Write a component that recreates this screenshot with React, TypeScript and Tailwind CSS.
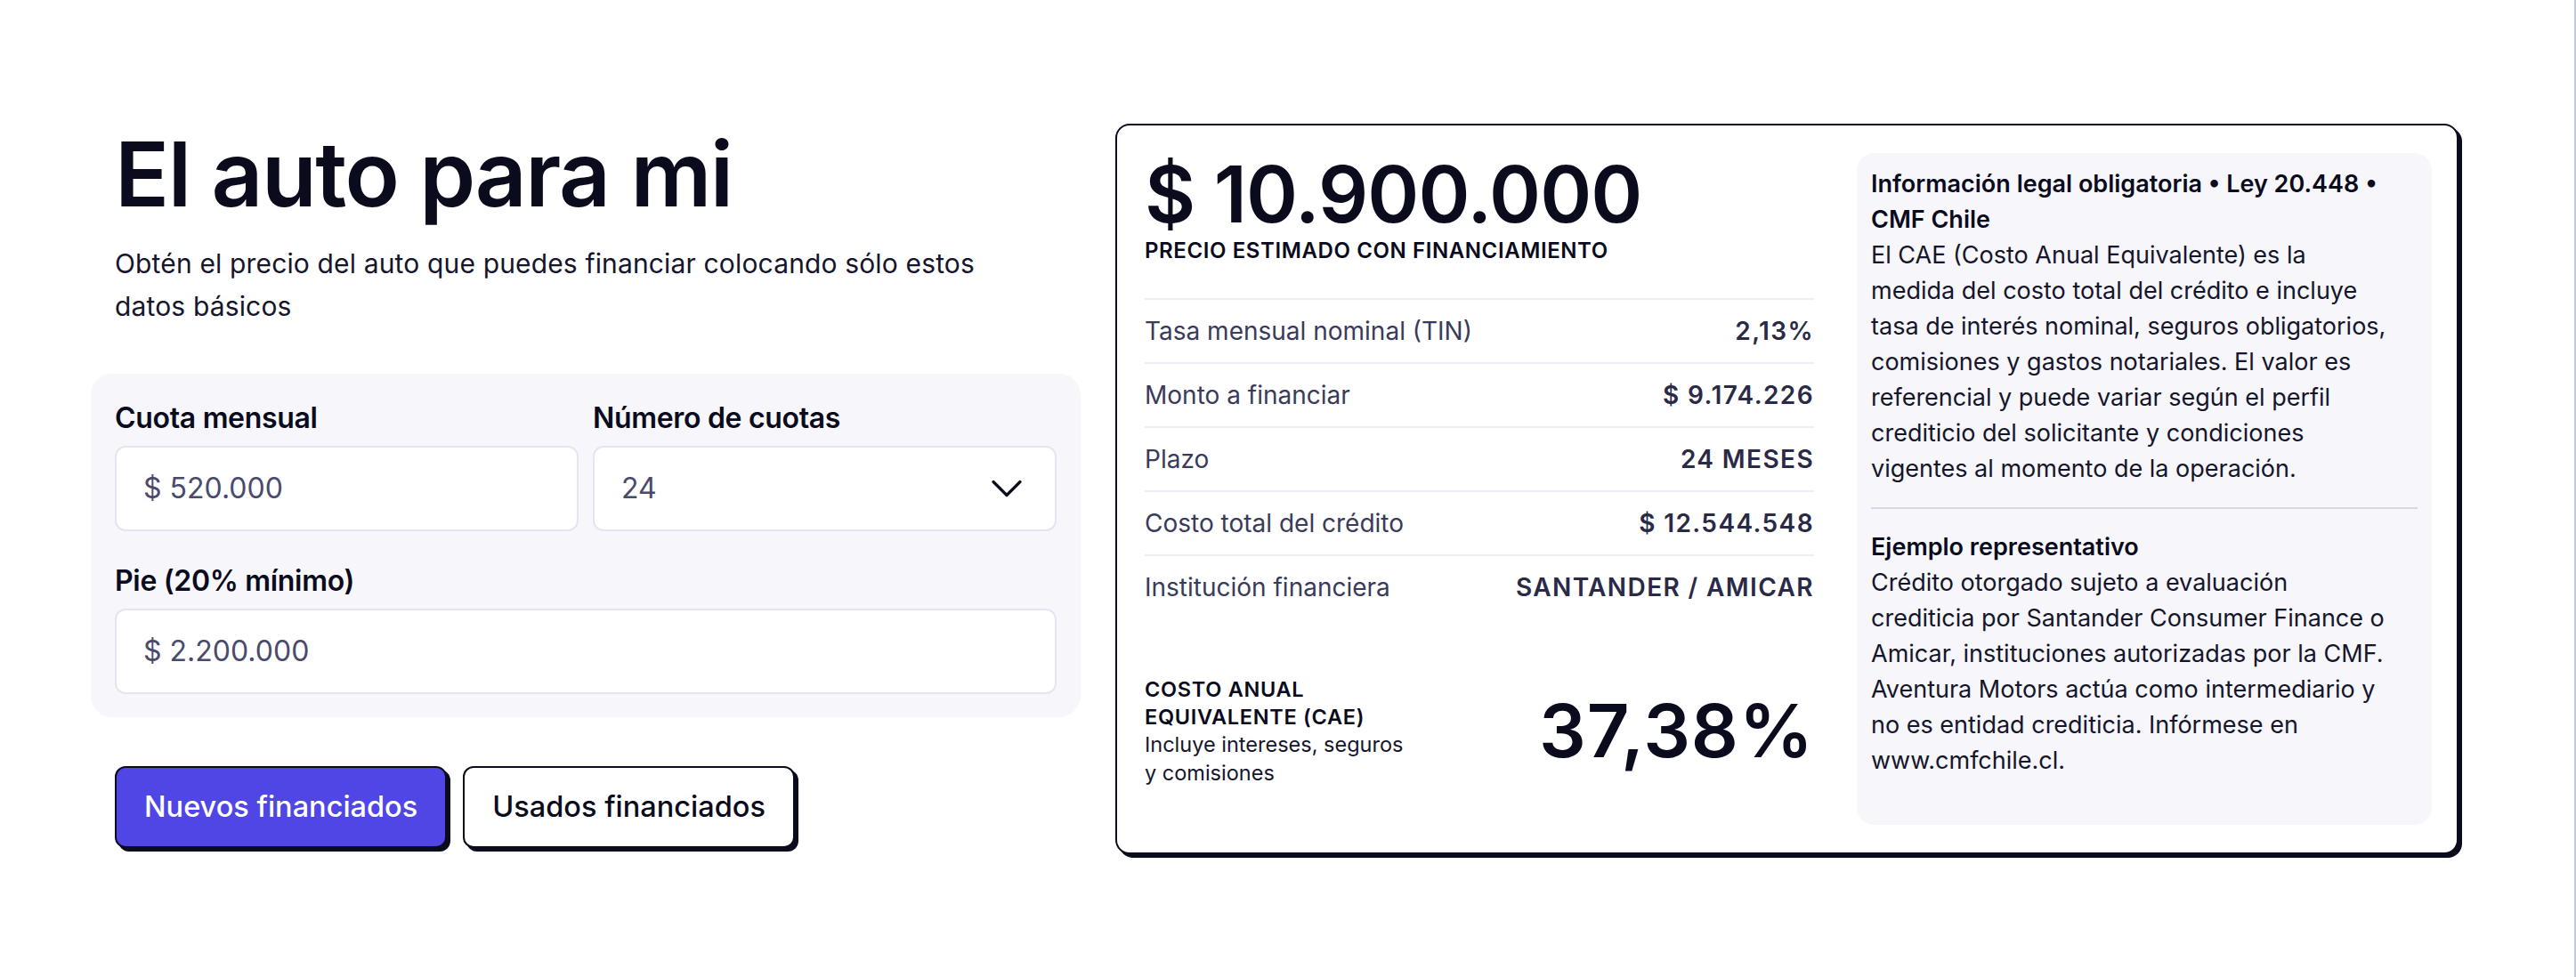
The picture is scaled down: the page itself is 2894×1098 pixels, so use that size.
import { ChevronDown } from "lucide-react";

const rows = [
  { label: "Tasa mensual nominal (TIN)", value: "2,13%" },
  { label: "Monto a financiar", value: "$ 9.174.226" },
  { label: "Plazo", value: "24 MESES" },
  { label: "Costo total del crédito", value: "$ 12.544.548" },
  { label: "Institución financiera", value: "SANTANDER / AMICAR" },
];

const legalHeading = ["Información legal obligatoria • Ley 20.448 •", "CMF Chile"];
const legalBody = [
  "El CAE (Costo Anual Equivalente) es la",
  "medida del costo total del crédito e incluye",
  "tasa de interés nominal, seguros obligatorios,",
  "comisiones y gastos notariales. El valor es",
  "referencial y puede variar según el perfil",
  "crediticio del solicitante y condiciones",
  "vigentes al momento de la operación.",
];
const exampleBody = [
  "Crédito otorgado sujeto a evaluación",
  "crediticia por Santander Consumer Finance o",
  "Amicar, instituciones autorizadas por la CMF.",
  "Aventura Motors actúa como intermediario y",
  "no es entidad crediticia. Infórmese en",
  "www.cmfchile.cl.",
];

function Lines({ lines, className }: { lines: string[]; className?: string }) {
  return (
    <p className={className}>
      {lines.map((line) => (
        <span key={line} className="block whitespace-nowrap">
          {line}
        </span>
      ))}
    </p>
  );
}

function Field({ label, value, select }: { label: string; value: string; select?: boolean }) {
  return (
    <div className="flex flex-col">
      <label className="mb-[11px] text-[32px] font-semibold leading-[40px] tracking-[-0.01em] text-[#0b0b1e]">{label}</label>
      <div className="flex h-[96px] items-center justify-between rounded-[12px] border-2 border-[#e6e4f3] bg-white pl-[30px] pr-[24px] text-[32px] text-[#4a4a6c]">
        <span>{value}</span>
        {select && <ChevronDown className="h-[60px] w-[60px] text-[#0b0b1e]" strokeWidth={1.3} aria-hidden="true" />}
      </div>
    </div>
  );
}

export default function App() {
  return (
    <div className="flex min-h-screen items-center border-r-2 border-[#c4c7d7] bg-white pl-[129px] font-['Inter',sans-serif] text-[#0b0b1e]">
      <div className="flex items-center gap-[66px]">
        {/* calculator column */}
        <div className="w-[1058px]">
          <h1 className="text-[101px] font-semibold leading-none tracking-[-0.015em]">El auto para mi</h1>
          <p className="mt-[26px] max-w-[1050px] text-[30px] leading-[48px] tracking-[0.005em] text-[#15152b]">
            Obtén el precio del auto que puedes financiar colocando sólo estos datos básicos
          </p>

          <div className="-mx-[27px] mt-[52px] rounded-[24px] bg-[#f7f7fb] px-[27px] pb-[26px] pt-[30px]">
            <div className="grid grid-cols-2 gap-x-[16px] gap-y-[36px]">
              <Field label="Cuota mensual" value="$ 520.000" />
              <Field label="Número de cuotas" value="24" select />
              <div className="col-span-2">
                <Field label="Pie (20% mínimo)" value="$ 2.200.000" />
              </div>
            </div>
          </div>

          <div className="mt-[55px] flex gap-[18px]">
            <button className="h-[92px] rounded-[12px] border-2 border-[#0b0b1e] bg-[#4f46e5] px-[31px] text-[32.5px] font-medium text-white shadow-[4px_4px_0_#0b0b1e]">
              Nuevos financiados
            </button>
            <button className="h-[92px] rounded-[12px] border-2 border-[#0b0b1e] bg-white px-[31px] text-[32.5px] font-medium text-[#0b0b1e] shadow-[4px_4px_0_#0b0b1e]">
              Usados financiados
            </button>
          </div>
        </div>

        {/* result card */}
        <div className="grid w-[1509px] grid-cols-[752px_1fr] gap-[48px] rounded-[16px] border-2 border-[#0b0b1e] bg-white p-[31px] pr-[28px] shadow-[4px_4px_0_#0b0b1e]">
          <div className="flex flex-col">
            <p className="mt-[2px] text-[88px] font-semibold leading-none tracking-[-0.01em]">$ 10.900.000</p>
            <p className="mt-[6px] text-[24px] font-semibold uppercase leading-[28px] tracking-[0.025em]">
              Precio estimado con financiamiento
            </p>

            <div className="mt-[39px]">
              {rows.map((row) => (
                <div key={row.label} className="flex h-[72px] items-center justify-between border-t-2 border-[#ededf5]">
                  <span className="text-[28px] text-[#3a3a5a]">{row.label}</span>
                  <span className="text-[28px] font-semibold tracking-[0.05em] text-[#2a2a48]">{row.value}</span>
                </div>
              ))}
            </div>

            <div className="flex flex-1 items-center justify-between pt-[22px]">
              <div>
                <p className="text-[23.5px] font-semibold uppercase leading-[31px] tracking-[0.03em]">
                  Costo anual
                  <br />
                  equivalente (CAE)
                </p>
                <p className="text-[23.5px] leading-[32px] text-[#15152b]">
                  Incluye intereses, seguros
                  <br />y comisiones
                </p>
              </div>
              <p className="text-[83px] font-semibold leading-none tracking-[0.01em]">37,38%</p>
            </div>
          </div>

          <div className="rounded-[20px] bg-[#f6f6fb] px-[16px] pb-[52px] pt-[15px] text-[27px] leading-[40px] text-[#15152b]">
            <Lines lines={legalHeading} className="font-semibold text-[#0b0b1e]" />
            <Lines lines={legalBody} />
            <div className="my-[23px] h-[2px] bg-[#d5d8e6]" />
            <Lines lines={["Ejemplo representativo"]} className="font-semibold text-[#0b0b1e]" />
            <Lines lines={exampleBody} />
          </div>
        </div>
      </div>
    </div>
  );
}
